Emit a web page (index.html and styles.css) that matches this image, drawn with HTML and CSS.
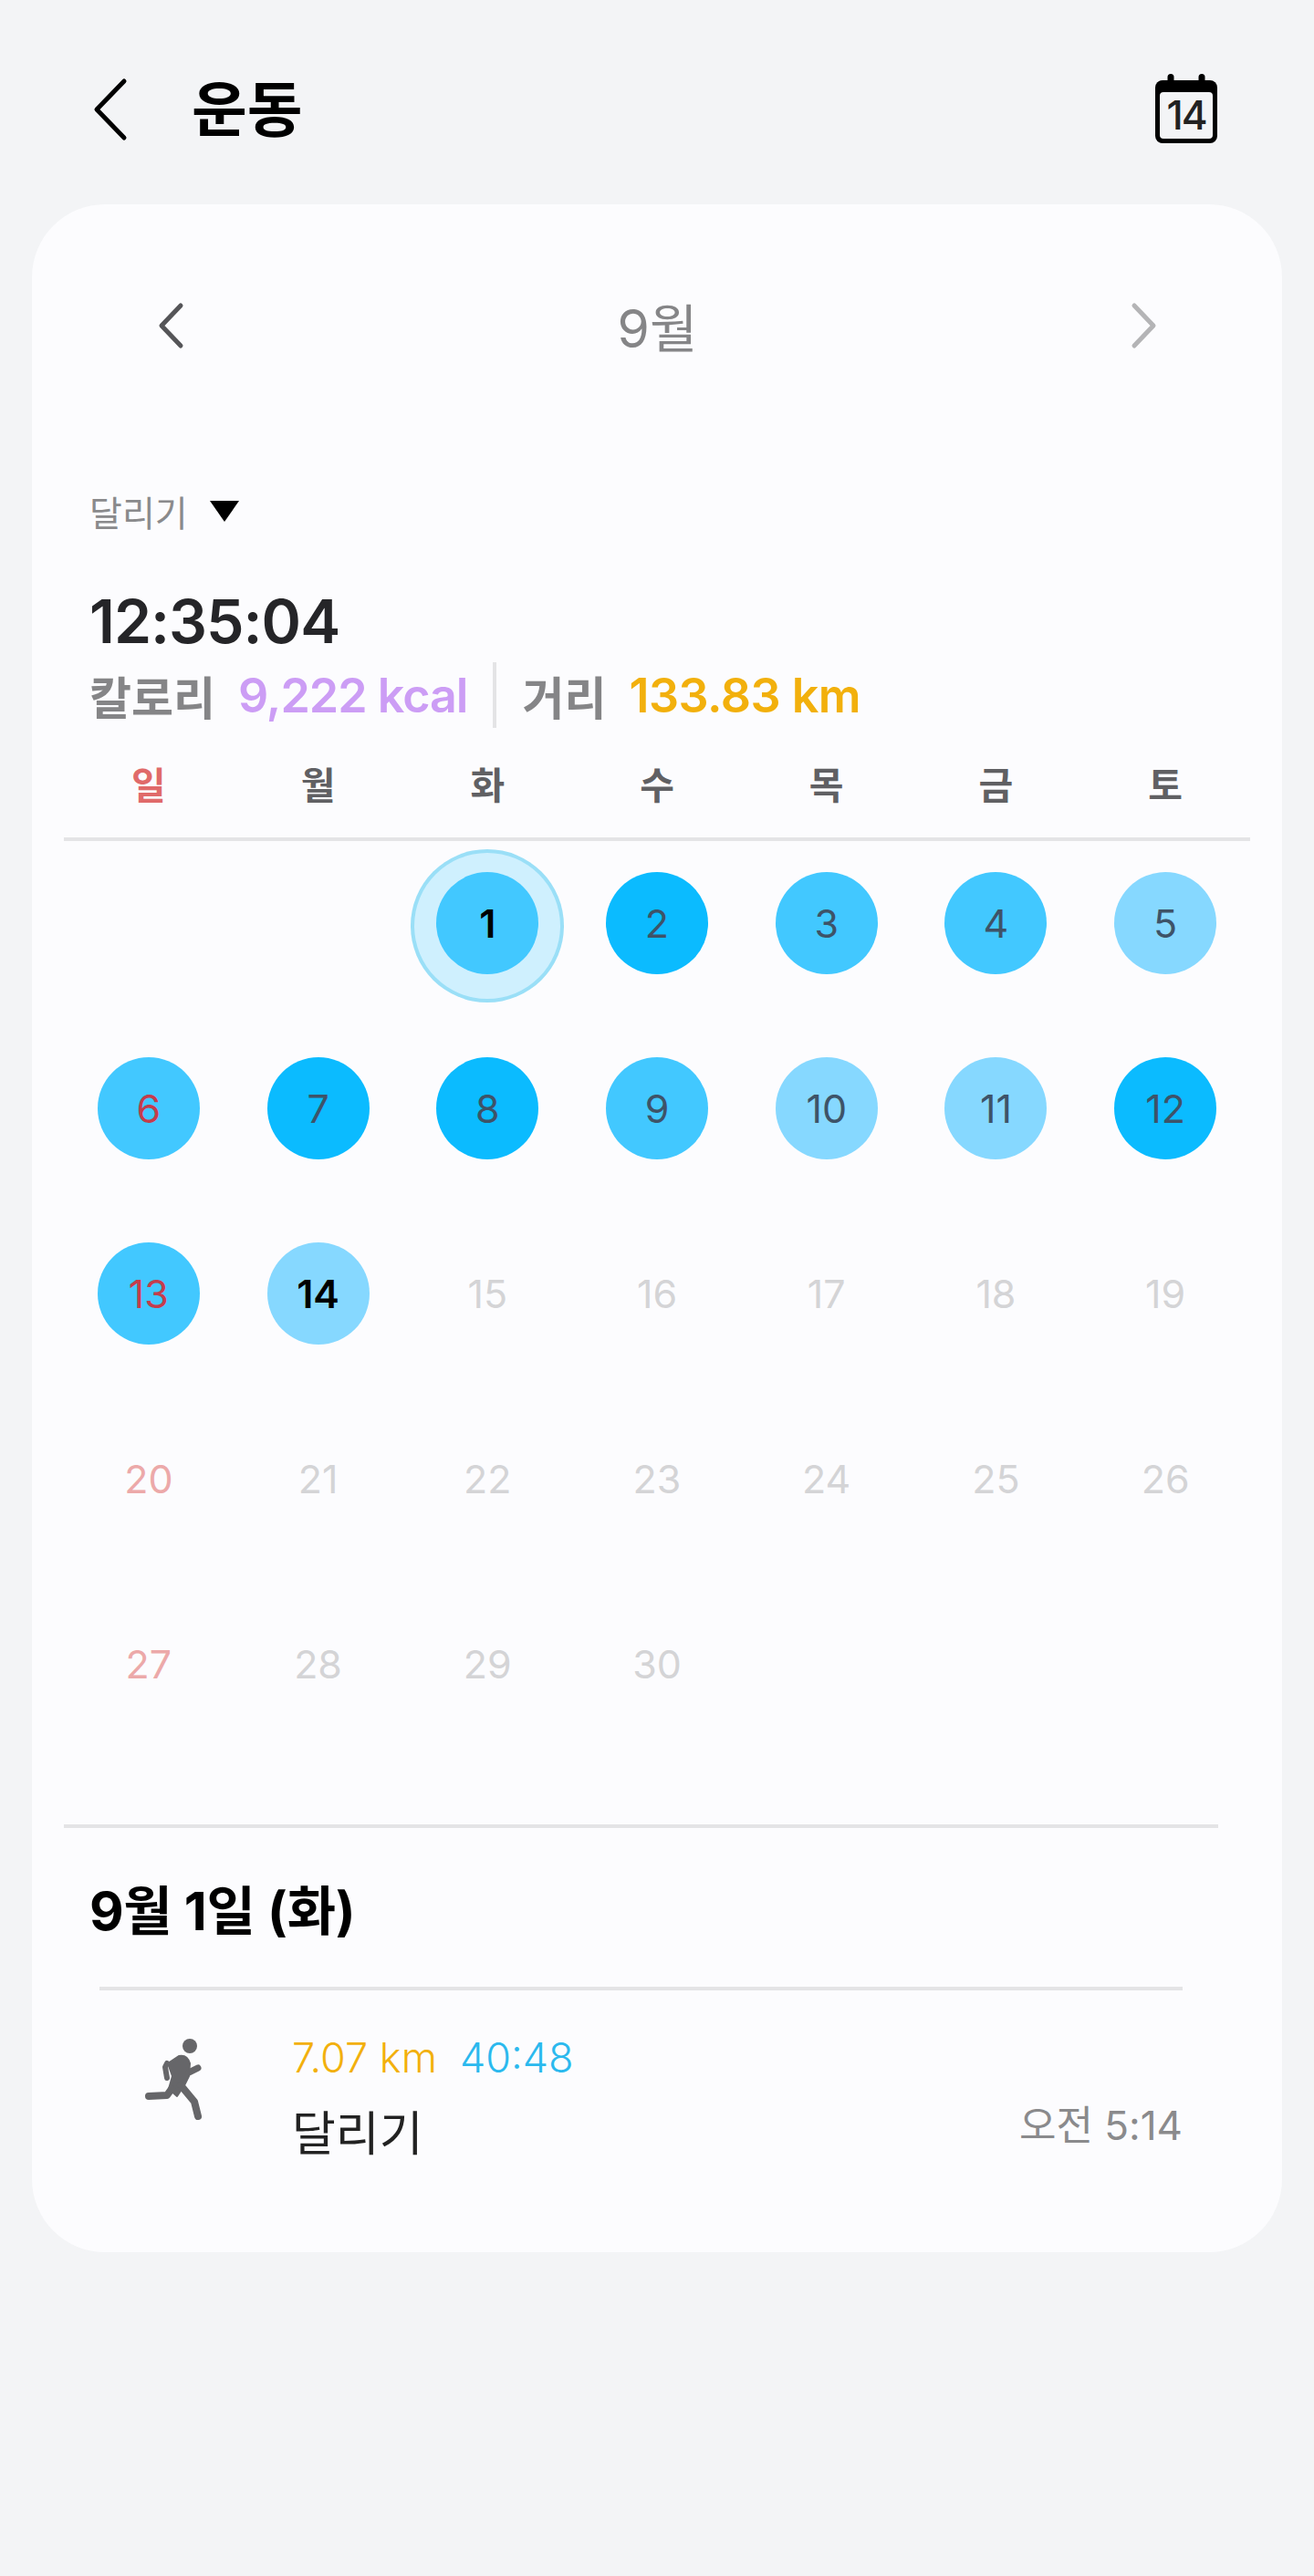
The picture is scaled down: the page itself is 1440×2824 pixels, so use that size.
FILE: index.html
```html
<!DOCTYPE html>
<html lang="ko">

<head>
    <meta charset="UTF-8">
    <meta name="viewport" content="width=device-width, initial-scale=1.0">
    <title>운동</title>
    <link rel="stylesheet" href="styles.css">
</head>

<body>
    <header class="topbar">
        <svg class="back-icon" width="60" height="120" viewBox="0 0 60 120">
            <path d="M36 29 L6 60 L36 91" fill="none" stroke="#000" stroke-width="5" stroke-linecap="round" stroke-linejoin="round"/>
        </svg>
        <h1 class="title">운동</h1>
        <svg class="calendar-icon" width="120" height="120" viewBox="0 0 120 120">
            <rect x="26" y="28" width="68" height="69" rx="8" fill="#000"/>
            <rect x="39.500" y="21" width="7" height="12" rx="3.500" fill="#000"/>
            <rect x="73.500" y="21" width="7" height="12" rx="3.500" fill="#000"/>
            <rect x="31" y="41" width="58" height="51" rx="4" fill="#f3f4f6"/>
            <text class="calendar-day" x="60" y="82" text-anchor="middle">14</text>
        </svg>
    </header>

    <main class="card">
        <div class="month-nav">
            <svg width="30" height="60" viewBox="0 0 30 60">
                <path d="M25 8 L4 30 L25 52" fill="none" stroke="#555558" stroke-width="5" stroke-linecap="round" stroke-linejoin="round"/>
            </svg>
            <span class="month-label">9월</span>
            <svg width="30" height="60" viewBox="0 0 30 60">
                <path d="M5 8 L26 30 L5 52" fill="none" stroke="#b4b4b6" stroke-width="5" stroke-linecap="round" stroke-linejoin="round"/>
            </svg>
        </div>

        <div class="filter">
            <span>달리기</span>
            <i class="filter-arrow"></i>
        </div>
        <div class="total-time">12:35:04</div>
        <div class="stats">
            <span class="stat-label">칼로리</span>
            <span class="stat-value kcal">9,222 kcal</span>
            <i class="stat-divider"></i>
            <span class="stat-label">거리</span>
            <span class="stat-value dist">133.83 km</span>
        </div>

        <div class="weekdays">
            <span class="sun">일</span>
            <span>월</span>
            <span>화</span>
            <span>수</span>
            <span>목</span>
            <span>금</span>
            <span>토</span>
        </div>

        <div class="days">
            <span class="day"></span>
            <span class="day"></span>
            <span class="day mid strong selected">1</span>
            <span class="day dark">2</span>
            <span class="day mid">3</span>
            <span class="day mid">4</span>
            <span class="day light">5</span>

            <span class="day mid red">6</span>
            <span class="day dark">7</span>
            <span class="day dark">8</span>
            <span class="day mid">9</span>
            <span class="day light">10</span>
            <span class="day light">11</span>
            <span class="day dark">12</span>

            <span class="day mid red">13</span>
            <span class="day light strong">14</span>
            <span class="day future">15</span>
            <span class="day future">16</span>
            <span class="day future">17</span>
            <span class="day future">18</span>
            <span class="day future">19</span>

            <span class="day future-red">20</span>
            <span class="day future">21</span>
            <span class="day future">22</span>
            <span class="day future">23</span>
            <span class="day future">24</span>
            <span class="day future">25</span>
            <span class="day future">26</span>

            <span class="day future-red">27</span>
            <span class="day future">28</span>
            <span class="day future">29</span>
            <span class="day future">30</span>
        </div>

        <div class="rule rule-wide"></div>
        <h2 class="date-head">9월 1일 (화)</h2>
        <div class="rule rule-inner"></div>

        <div class="record">
            <svg class="run-icon" width="120" height="120" viewBox="0 0 120 120" fill="none" stroke="#666669" stroke-linecap="round" stroke-linejoin="round">
                <circle cx="78" cy="33" r="8" fill="#666669" stroke="none"/>
                <path d="M54 52 L66 44 Q75 42 78 52 L77 66 L72 76 L64 88 L55 80 L59 66 Z" fill="#666669" stroke="#666669" stroke-width="2"/>
                <path d="M53 52 L51 56 L53 68" stroke-width="6"/>
                <path d="M77 62 L87 57" stroke-width="7"/>
                <path d="M58 80 L53 87 L33 88" stroke-width="8"/>
                <path d="M68 76 L83 94 L87 110" stroke-width="8"/>
            </svg>
            <div class="record-text">
                <div class="record-stats">
                    <span class="record-dist">7.07 km</span>
                    <span class="record-time">40:48</span>
                </div>
                <div class="record-name">달리기</div>
            </div>
            <div class="record-clock">오전 5:14</div>
        </div>
    </main>
</body>

</html>
```

FILE: styles.css
```css
html {
    font-family: Inter, "Noto Sans CJK KR", sans-serif;
}

body {
    margin: 0;
    min-height: 2824px;
    background-color: #f3f4f6;
}

.topbar {
    height: 224px;
    box-sizing: border-box;
    padding: 60px 80px 0 100px;
    display: flex;
    align-items: flex-start;
}

.title {
    margin: 0 0 0 50px;
    height: 120px;
    line-height: 120px;
    font-size: 66px;
    font-weight: 700;
    color: #000;
}

.calendar-icon {
    margin-left: auto;
}

.calendar-day {
    font-size: 44px;
    font-weight: 500;
    letter-spacing: -2px;
    fill: #222;
}

.card {
    margin: 0 35px;
    height: 2245px;
    box-sizing: border-box;
    background-color: #fcfcfe;
    border-radius: 80px;
    overflow: hidden;
}

.month-nav {
    height: 266px;
    padding: 0 137px 0 138px;
    display: flex;
    align-items: center;
    justify-content: space-between;
}

.month-label {
    margin-top: -2px;
    font-size: 57px;
    color: #858587;
}

.filter {
    margin-top: 40px;
    padding-left: 63px;
    height: 60px;
    display: flex;
    align-items: center;
    font-size: 39px;
    color: #8a8a8c;
}

.filter-arrow {
    margin-left: 24px;
    width: 0;
    height: 0;
    border-left: 16px solid transparent;
    border-right: 16px solid transparent;
    border-top: 23px solid #000;
}

.total-time {
    margin-top: 50px;
    padding-left: 63px;
    height: 80px;
    line-height: 82px;
    font-size: 66px;
    font-weight: 600;
    letter-spacing: -1px;
    color: #252528;
}

.stats {
    margin-top: 6px;
    padding-left: 63px;
    height: 72px;
    display: flex;
    align-items: center;
    font-size: 50px;
    white-space: nowrap;
}

.stat-label {
    font-weight: 600;
    color: #858587;
}

.stat-value {
    margin-left: 25px;
    font-size: 52px;
    font-weight: 600;
}

.kcal {
    letter-spacing: -1px;
    color: #cc9df5;
}

.dist {
    letter-spacing: -0.5px;
    color: #f2b00c;
}

.stat-divider {
    margin: 0 28px;
    width: 4px;
    height: 72px;
    background-color: #e4e4e6;
}

.weekdays {
    margin: 30px 35px 0;
    height: 57px;
    padding-top: 3px;
    padding-bottom: 30px;
    border-bottom: 4px solid #e4e4e6;
    display: grid;
    grid-template-columns: repeat(7, 1fr);
    font-size: 41px;
    font-weight: 600;
    line-height: 60px;
    text-align: center;
    color: #606063;
}

.sun {
    color: #e06a6a;
}

.days {
    margin: 0 35px;
    padding-top: 34px;
    display: grid;
    grid-template-columns: repeat(7, 1fr);
    row-gap: 91px;
}

.day {
    justify-self: center;
    width: 112px;
    height: 112px;
    border-radius: 50%;
    display: flex;
    align-items: center;
    justify-content: center;
    font-size: 43px;
    color: #3e5368;
}

.dark {
    background-color: #0bbbff;
}

.mid {
    background-color: #42c8ff;
}

.light {
    background-color: #86d8ff;
}

.red {
    color: #c43c4c;
}

.strong {
    font-weight: 600;
    color: #000;
}

.future {
    color: #d4d4d6;
}

.future-red {
    color: #eca9a9;
}

/* ring is a bit lower than the circle in the reference */
.selected {
    box-shadow: 0 3px 0 24px #cff0fe, 0 3px 0 28px #9adff7;
}

.rule {
    height: 4px;
    background-color: #e4e4e6;
}

.rule-wide {
    margin: 120px 70px 0 35px;
}

.rule-inner {
    margin: 0 109px 0 74px;
}

.date-head {
    margin: 0;
    padding-left: 63px;
    height: 174px;
    display: flex;
    align-items: center;
    font-size: 58px;
    font-weight: 700;
    letter-spacing: -0.3px;
    color: #000;
}

.record {
    padding: 28px 109px 0 95px;
    display: flex;
    align-items: flex-start;
}

.run-icon {
    flex: none;
}

.record-text {
    margin-left: 70px;
    margin-top: 20px;
}

.record-stats {
    height: 50px;
    display: flex;
    align-items: center;
    gap: 25px;
    font-size: 45px;
    font-weight: 300;
}

.record-dist {
    color: #f2b00c;
}

.record-time {
    color: #2bb9ee;
}

.record-name {
    margin-top: 27px;
    font-size: 52px;
    line-height: 66px;
    color: #222;
}

.record-clock {
    margin-left: auto;
    margin-top: 95px;
    font-size: 44px;
    line-height: 50px;
    color: #8a8a8c;
}
```
